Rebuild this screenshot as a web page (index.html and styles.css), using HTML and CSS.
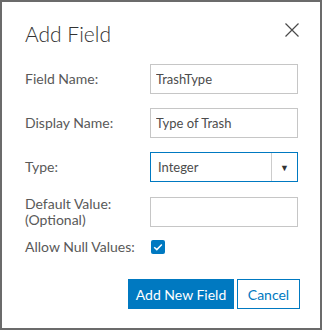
FILE: index.html
```html
<!DOCTYPE html>
<html lang="en">
<head>
    <meta charset="UTF-8">
    <meta name="viewport" content="width=device-width, initial-scale=1.0">
    <title>Add Field</title>
    <link rel="stylesheet" href="styles.css">
</head>
<body>
    <div class="dialog">
        <div class="dialog-header">
            <h1>Add Field</h1>
            <button class="close-btn" aria-label="Close">
                <svg width="14" height="14" viewBox="0 0 14 14">
                    <path d="M0.5 0.5 L13.5 13.5 M13.5 0.5 L0.5 13.5" stroke="#4a4a4a" stroke-width="1.2" fill="none"/>
                </svg>
            </button>
        </div>

        <div class="form-row">
            <label for="field-name">Field Name:</label>
            <input type="text" id="field-name" value="TrashType">
        </div>

        <div class="form-row">
            <label for="display-name">Display Name:</label>
            <input type="text" id="display-name" value="Type of Trash">
        </div>

        <div class="form-row">
            <label for="field-type">Type:</label>
            <div class="select-box" id="field-type">
                <span class="select-value">Integer</span>
                <span class="select-arrow">&#9660;</span>
            </div>
        </div>

        <div class="form-row">
            <label for="default-value">Default Value:<br>(Optional)</label>
            <input type="text" id="default-value">
        </div>

        <div class="form-row check-row">
            <label for="allow-null">Allow Null Values:</label>
            <span class="checkbox" id="allow-null">
                <svg width="10" height="8" viewBox="0 0 10 8">
                    <path d="M1.2 4.2 L3.8 6.6 L8.8 1.4" stroke="#fff" stroke-width="1.5" fill="none"/>
                </svg>
            </span>
        </div>

        <div class="button-group">
            <button class="btn btn-primary">Add New Field</button>
            <button class="btn btn-secondary">Cancel</button>
        </div>
    </div>
</body>
</html>
```

FILE: styles.css
```css
body {
    margin: 0;
    font-family: Lato, "Open Sans", sans-serif;
    background: #fff;
}
.dialog {
    width: 322px;
    height: 330px;
    box-sizing: border-box;
    border: 2px solid #6b6b6b;
    padding: 18px 20px 0 23px;
    background: white;
}
.dialog-header {
    display: flex;
    justify-content: space-between;
    align-items: flex-start;
    margin-bottom: 16px;
}
h1 {
    margin: 0;
    font-size: 21px;
    font-weight: 300;
    color: #323232;
    line-height: 28px;
}
.close-btn {
    border: none;
    background: none;
    padding: 0;
    margin: 3px 1px 0 0;
    cursor: pointer;
}
.form-row {
    display: grid;
    grid-template-columns: 125px 148px;
    height: 30px;
    align-items: center;
    margin-bottom: 14px;
}
label {
    font-size: 14px;
    color: #595959;
    line-height: 16px;
}
input[type="text"] {
    height: 30px;
    box-sizing: border-box;
    border: 1px solid #c6c6c6;
    padding: 0 5px;
    font-family: inherit;
    font-size: 13px;
    color: #4c4c4c;
    outline: none;
}
.select-box {
    height: 30px;
    box-sizing: border-box;
    border: 1px solid #0079c1;
    display: flex;
    align-items: center;
    font-size: 13px;
    color: #4c4c4c;
}
.select-value {
    flex: 1;
    padding-left: 7px;
}
.select-arrow {
    width: 25px;
    height: 100%;
    border-left: 1px solid #ccc;
    display: flex;
    align-items: center;
    justify-content: center;
    font-size: 9px;
    color: #333;
}
.check-row {
    height: 14px;
    margin-top: -1px;
}
.checkbox {
    width: 14px;
    height: 14px;
    background: #0079c1;
    border-radius: 2px;
    display: flex;
    align-items: center;
    justify-content: center;
    margin-left: 1px;
}
.button-group {
    display: flex;
    justify-content: flex-end;
    gap: 3px;
    margin-top: 26px;
}
.btn {
    height: 30px;
    box-sizing: border-box;
    font-family: inherit;
    font-size: 14px;
    padding: 0;
    white-space: nowrap;
    border: 1px solid #0079c1;
    cursor: pointer;
}
.btn-primary {
    background: #0079c1;
    color: white;
    width: 106px;
}
.btn-secondary {
    background: white;
    color: #0079c1;
    width: 63px;
}
```
